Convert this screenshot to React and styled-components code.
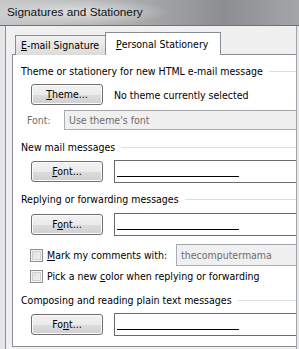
import React from "react";
import styled, { createGlobalStyle } from "styled-components";

const Global = createGlobalStyle`
  html, body { margin: 0; padding: 0; overflow: hidden; }
  body {
    font-family: "DejaVu Sans Condensed", "DejaVu Sans", sans-serif;
    font-stretch: condensed;
    font-size: 10.5px;
    color: #000;
  }
`;

const Window = styled.div`
  width: 299px;
  height: 349px;
  display: flex;
  flex-direction: column;
  background: #e4e6e8;
  overflow: hidden;
`;

const TitleBar = styled.div`
  height: 26px;
  flex: none;
  display: flex;
  align-items: center;
  padding-left: 7px;
  padding-bottom: 2px;
  box-sizing: border-box;
  border-bottom: 1px solid #6f7378;
  font-family: "Liberation Sans", Arial, sans-serif;
  font-stretch: normal;
  font-size: 11.8px;
  color: #111;
  background:
    radial-gradient(ellipse 95px 14px at 75px 12px, rgba(222, 224, 226, 0.95), rgba(222, 224, 226, 0) 100%),
    linear-gradient(90deg, #c6c8ca 0%, #a9abad 45%, #8c8e91 75%, #a3a5a8 100%);
`;

const Client = styled.div`
  flex: 1;
  margin-left: 5px;
  width: 292px;
  box-sizing: border-box;
  border-left: 1px solid #8d9095;
  border-right: 1px solid #a2a4a7;
  background: #f0f0f0;
  padding: 6px 0 0 6px;
  overflow: hidden;
  display: flex;
  flex-direction: column;
`;

const TabStrip = styled.div`
  display: flex;
  align-items: flex-end;
  height: 23px;
  padding-left: 3px;
  position: relative;
  z-index: 1;
`;

const Tab = styled.div`
  box-sizing: border-box;
  display: flex;
  align-items: center;
  border: 1px solid #898c95;
  border-bottom: none;
  white-space: nowrap;
  height: ${(p) => (p.$active ? "23px" : "20px")};
  width: ${(p) => p.$w}px;
  padding: ${(p) => (p.$active ? "0 0 1px 10px" : "0 0 1px 5px")};
  background: ${(p) =>
    p.$active ? "#fff" : "linear-gradient(#f3f3f3, #e6e6e6 50%, #dcdcdc)"};
  border-right: ${(p) => (p.$active ? "1px solid #898c95" : "none")};
`;

const Panel = styled.div`
  margin-top: -1px;
  width: 300px;
  flex: 1;
  background: #fff;
  border: 1px solid #898c95;
  box-sizing: border-box;
  padding: 9px 0 0 8px;
  display: flex;
  flex-direction: column;
  margin-bottom: 2px;
`;

const Heading = styled.div`
  display: flex;
  align-items: center;
  height: 14px;
  margin-top: ${(p) => p.$top || 0}px;
  white-space: nowrap;
  &::after {
    content: "";
    flex: 1;
    margin-left: 6px;
    border-top: 1px solid #d5dfe5;
  }
`;

const Row = styled.div`
  display: flex;
  align-items: center;
  margin-top: ${(p) => p.$top || 0}px;
  padding-left: ${(p) => p.$indent ?? 10}px;
  height: ${(p) => p.$h || 21}px;
  white-space: nowrap;
`;

const Button = styled.button`
  width: 72px;
  height: 21px;
  flex: none;
  box-sizing: border-box;
  border: 1px solid #707070;
  border-radius: 3px;
  box-shadow: inset 0 0 0 1px #fbfbfb;
  background: linear-gradient(#f2f2f2 0%, #ebebeb 50%, #dddddd 51%, #cfcfcf 100%);
  font: inherit;
  color: #000;
  padding: 0 0 1px;
  margin-right: 11px;
`;

const Key = styled.span`
  text-decoration: underline;
  text-underline-offset: 1px;
`;

const Muted = styled.span`
  color: #6d6d6d;
  width: ${(p) => p.$w}px;
  flex: none;
`;

const Field = styled.div`
  flex: 1;
  height: ${(p) => p.$h || 20}px;
  box-sizing: border-box;
  border: 1px solid #abadb3;
  border-top-color: #a4a6ab;
  background: #f0f0f0;
  color: #6d6d6d;
  display: flex;
  align-items: center;
  padding-left: 4px;
  padding-bottom: 1px;
`;

const Preview = styled.div`
  flex: 1;
  height: 23px;
  box-sizing: border-box;
  border: 1px solid #6a6a6a;
  border-right: none;
  background: #fff;
  padding: 15px 0 0 2px;
`;

const SampleLine = styled.div`
  width: 122px;
  border-top: 1px solid #000;
`;

const Check = styled.span`
  width: 13px;
  height: 13px;
  flex: none;
  box-sizing: border-box;
  border: 1px solid #8f8f8f;
  background: linear-gradient(135deg, #dcdcdc, #f6f6f6);
  box-shadow: inset 0 0 0 1px #f4f4f4, inset 0 0 0 2px #d0d0d0;
  margin-right: 4px;
`;

const CheckLabel = styled.span`
  width: ${(p) => (p.$w ? `${p.$w}px` : "auto")};
  flex: none;
`;

function FontRow({ top, accel }) {
  const word = "Font";
  const i = word.indexOf(accel);
  return (
    <Row $top={top} $h={23}>
      <Button>
        {word.slice(0, i)}
        <Key>{accel}</Key>
        {word.slice(i + 1)}...
      </Button>
      <Preview>
        <SampleLine />
      </Preview>
    </Row>
  );
}

export default function App() {
  return (
    <>
      <Global />
      <Window>
        <TitleBar>Signatures and Stationery</TitleBar>
        <Client>
          <TabStrip>
            <Tab $w={90}>
              <Key>E</Key>-mail Signature
            </Tab>
            <Tab $active $w={116}>
              <Key>P</Key>ersonal Stationery
            </Tab>
          </TabStrip>
          <Panel>
            <Heading>Theme or stationery for new HTML e-mail message</Heading>
            <Row $top={6}>
              <Button>
                <Key>T</Key>heme...
              </Button>
              No theme currently selected
            </Row>
            <Row $top={5} $indent={6} $h={20}>
              <Muted $w={37}>Font:</Muted>
              <Field>Use theme's font</Field>
            </Row>

            <Heading $top={10}>New mail messages</Heading>
            <FontRow top={6} accel="F" />

            <Heading $top={9}>Replying or forwarding messages</Heading>
            <FontRow top={7} accel="o" />

            <Row $top={8} $indent={9} $h={22}>
              <Check />
              <CheckLabel $w={129}>
                <Key>M</Key>ark my comments with:
              </CheckLabel>
              <Field $h={22}>thecomputermama</Field>
            </Row>
            <Row $top={3} $indent={9} $h={14}>
              <Check />
              <CheckLabel>
                Pick a new <Key>c</Key>olor when replying or forwarding
              </CheckLabel>
            </Row>

            <Heading $top={10}>Composing and reading plain text messages</Heading>
            <FontRow top={6} accel="n" />
          </Panel>
        </Client>
      </Window>
    </>
  );
}
